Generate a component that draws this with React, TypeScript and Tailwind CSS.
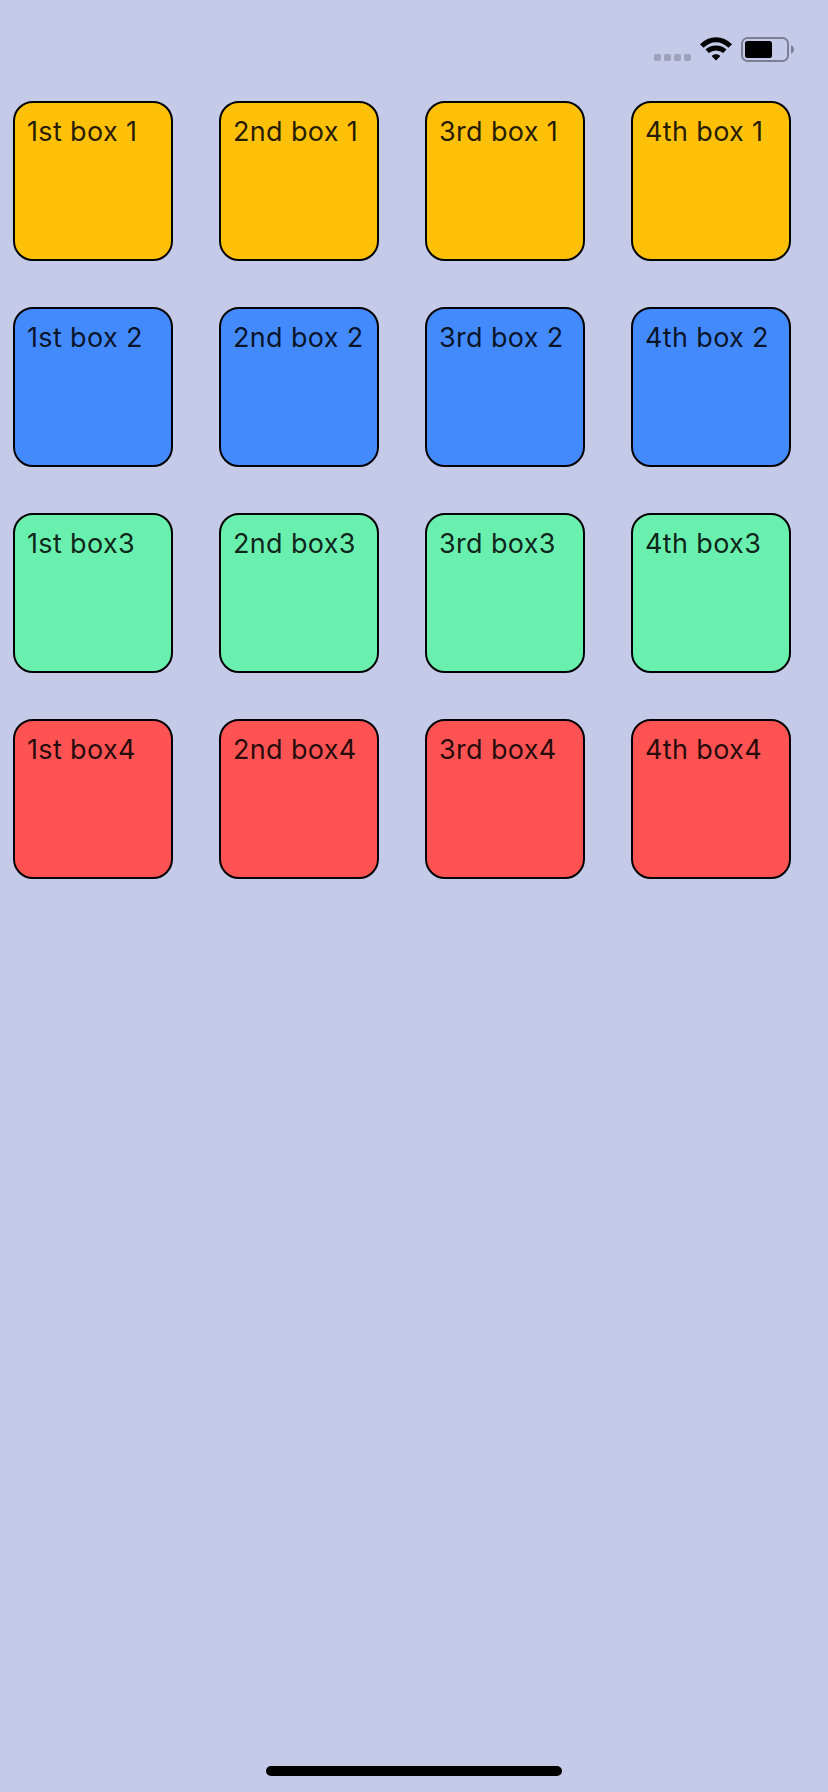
const rows = [
  { color: "bg-[#ffc107]", suffix: "box 1" },
  { color: "bg-[#448aff]", suffix: "box 2" },
  { color: "bg-[#69f0ae]", suffix: "box3" },
  { color: "bg-[#ff5252]", suffix: "box4" },
];
const columns = ["1st", "2nd", "3rd", "4th"];

function StatusBar() {
  return (
    <header className="flex h-[101px] items-start justify-end pt-[37px] pr-[34px]">
      <div className="mt-[17px] flex gap-[3px]">
        {[0, 1, 2, 3].map((n) => (
          <span key={n} className="size-[7px] rounded-[2px] bg-[#9ea2bb]" />
        ))}
      </div>
      <svg className="ml-[9px] h-6 w-8" viewBox="0 0 32 24" fill="none">
        <g stroke="#000" strokeWidth="5">
          <path d="M1.7 9 C10 0.5 22 0.5 30.3 9" />
          <path d="M7.2 14.3 C12 9.8 20 9.8 24.8 14.3" />
        </g>
        <path d="M11.6 19 C14 16.6 18 16.6 20.4 19 L16 23.6 Z" fill="#000" />
      </svg>
      <svg className="ml-[9px] h-[25px] w-[53px]" viewBox="0 0 53 25" fill="none">
        <rect x="1" y="1" width="46" height="23" rx="5.5" stroke="#7c7f93" strokeWidth="2" />
        <rect x="4" y="4" width="27" height="17" rx="2.5" fill="#000" />
        <path d="M50 8.3 C54 9.8 54 15.2 50 16.7 Z" fill="#7c7f93" />
      </svg>
    </header>
  );
}

export default function App() {
  return (
    <div className="flex h-[1792px] w-[828px] flex-col bg-[#c5cae9] font-['Inter','Liberation_Sans',sans-serif]">
      <StatusBar />
      <main className="flex flex-1 flex-col gap-[46px] pl-[13px]">
        {rows.map((row) => (
          <div key={row.suffix} className="flex gap-[46px]">
            {columns.map((column) => (
              <div
                key={column}
                className={`size-[160px] rounded-[20px] border-2 border-black pt-[12px] pl-[12px] text-[27px] leading-[34px] tracking-[0.35px] whitespace-nowrap text-black/87 ${row.color}`}
              >
                {column} {row.suffix}
              </div>
            ))}
          </div>
        ))}
      </main>
      <footer className="flex justify-center pb-4">
        <div className="h-[10px] w-[296px] rounded-full bg-black" />
      </footer>
    </div>
  );
}
